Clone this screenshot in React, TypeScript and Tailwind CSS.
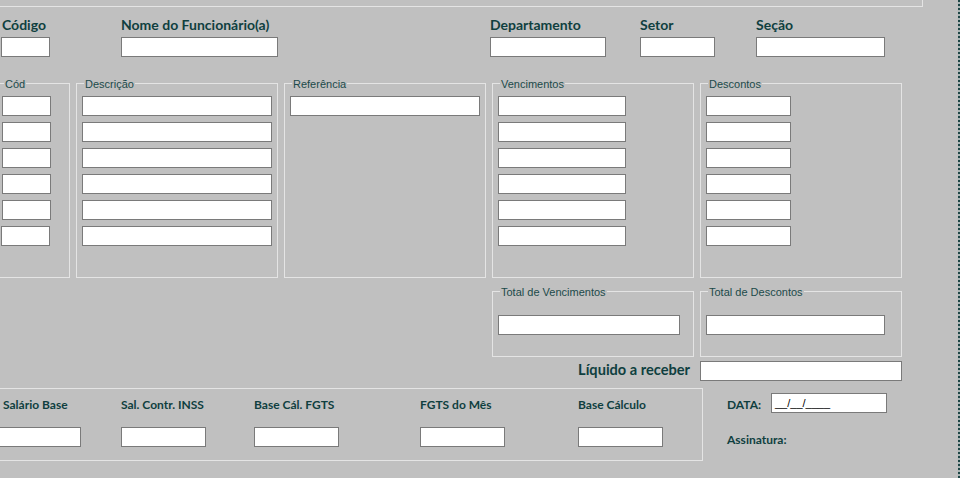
import React from "react";

const head =
  "font-['Lato',sans-serif] text-[14px] leading-[17px] font-bold text-[#0f3f3f] whitespace-nowrap";
const small =
  "font-['Lato',sans-serif] text-[12px] leading-[14px] font-bold text-[#0f3f3f] whitespace-nowrap";
const legend =
  "font-['Liberation_Sans',Arial,sans-serif] text-[11px] leading-[13px] text-[#1c4a4a] whitespace-nowrap";

function Input({ className = "", children }: { className?: string; children?: React.ReactNode }) {
  return (
    <div
      className={`h-[20px] shrink-0 border border-[#7a7a7a] bg-white ${className}`}
    >
      {children}
    </div>
  );
}

function Group({
  title,
  className,
  children,
}: {
  title: string;
  className: string;
  children?: React.ReactNode;
}) {
  return (
    <div className={`flex shrink-0 flex-col border border-[#e4e4e4] ${className}`}>
      <span className={`-mt-[6px] ml-[7px] self-start bg-[#c0c0c0] px-[1px] ${legend}`}>
        {title}
      </span>
      {children}
    </div>
  );
}

function Column({ w, count = 6 }: { w: string; count?: number }) {
  return (
    <div className="ml-[5px] mt-[5px] flex flex-col gap-[6px]">
      {Array.from({ length: count }).map((_, i) => (
        <Input key={i} className={w} />
      ))}
    </div>
  );
}

export default function App() {
  return (
    <div className="flex h-[478px] w-[960px] overflow-hidden bg-[#c0c0c0]">
      <div className="flex w-[958px] shrink-0 flex-col">
        {/* top group box (cut off) */}
        <div className="ml-[-4px] h-[7px] w-[927px] shrink-0 border-b border-r border-[#e4e4e4]" />

        {/* employee header */}
        <div className="mt-[9px] flex">
          <div className="ml-[1px] flex w-[49px] flex-col gap-[4px]">
            <span className={`pl-[1px] ${head}`}>Código</span>
            <Input className="w-[49px]" />
          </div>
          <div className="ml-[71px] flex w-[157px] flex-col gap-[4px]">
            <span className={head}>Nome do Funcionário(a)</span>
            <Input className="w-[157px]" />
          </div>
          <div className="ml-[212px] flex w-[116px] flex-col gap-[4px]">
            <span className={head}>Departamento</span>
            <Input className="w-[116px]" />
          </div>
          <div className="ml-[34px] flex w-[75px] flex-col gap-[4px]">
            <span className={head}>Setor</span>
            <Input className="w-[75px]" />
          </div>
          <div className="ml-[41px] flex w-[129px] flex-col gap-[4px]">
            <span className={head}>Seção</span>
            <Input className="w-[129px]" />
          </div>
        </div>

        {/* items */}
        <div className="ml-[-4px] mt-[26px] flex h-[195px] shrink-0 gap-[6px]">
          <Group title="Cód" className="w-[74px]">
            <div className="ml-[5px] mt-[5px] flex flex-col gap-[6px]">
              <Input className="w-[49px]" />
              <Input className="w-[49px]" />
              <Input className="w-[49px]" />
              <Input className="w-[49px]" />
              <Input className="w-[49px]" />
              <Input className="ml-[-1px] w-[49px]" />
            </div>
          </Group>
          <Group title="Descrição" className="w-[202px]">
            <Column w="w-[190px]" />
          </Group>
          <Group title="Referência" className="w-[202px]">
            <Column w="w-[190px]" count={1} />
          </Group>
          <Group title="Vencimentos" className="w-[202px]">
            <Column w="w-[128px]" />
          </Group>
          <Group title="Descontos" className="w-[202px]">
            <Column w="w-[85px]" />
          </Group>
        </div>

        {/* totals */}
        <div className="ml-[492px] mt-[13px] flex h-[66px] shrink-0 gap-[6px]">
          <Group title="Total de Vencimentos" className="w-[202px]">
            <Input className="ml-[5px] mt-[16px] w-[182px]" />
          </Group>
          <Group title="Total de Descontos" className="w-[202px]">
            <Input className="ml-[5px] mt-[16px] w-[179px]" />
          </Group>
        </div>

        <div className="mt-[4px] flex items-start">
          <span className="w-[690px] whitespace-nowrap text-right font-['Lato',sans-serif] text-[14.6px] leading-[17px] font-bold text-[#0f3f3f]">
            Líquido a receber
          </span>
          <Input className="ml-[10px] w-[202px]" />
        </div>

        {/* bases + signature */}
        <div className="mt-[7px] flex">
          <div className="ml-[-8px] flex h-[73px] w-[711px] shrink-0 border border-[#e4e4e4] pt-[9px]">
            <div className="ml-[3px] flex w-[85px] flex-col gap-[15px]">
              <span className={`pl-[7px] ${small}`}>Salário Base</span>
              <Input className="w-[85px]" />
            </div>
            <div className="ml-[40px] flex w-[85px] flex-col gap-[15px]">
              <span className={small}>Sal. Contr. INSS</span>
              <Input className="w-[85px]" />
            </div>
            <div className="ml-[48px] flex w-[85px] flex-col gap-[15px]">
              <span className={small}>Base Cál. FGTS</span>
              <Input className="w-[85px]" />
            </div>
            <div className="ml-[81px] flex w-[85px] flex-col gap-[15px]">
              <span className={small}>FGTS do Mês</span>
              <Input className="w-[85px]" />
            </div>
            <div className="ml-[73px] flex w-[85px] flex-col gap-[15px]">
              <span className={small}>Base Cálculo</span>
              <Input className="w-[85px]" />
            </div>
          </div>

          <div className="ml-[24px] mt-[5px] flex flex-col">
            <div className="flex items-start">
              <span className={`mt-[5px] w-[44px] ${small}`}>DATA:</span>
              <Input className="w-[116px] pl-[3px]">
                <span className="block font-['Liberation_Sans',Arial,sans-serif] text-[11px] leading-[18px] text-black">
                  __/__/____
                </span>
              </Input>
            </div>
            <span className={`mt-[20px] ${small}`}>Assinatura:</span>
          </div>
        </div>
      </div>

      {/* dotted designer edge */}
      <div className="h-full w-[2px] shrink-0 bg-[repeating-linear-gradient(to_bottom,#1e4646_0px,#1e4646_2px,#a9b4b4_2px,#a9b4b4_4px)]" />
    </div>
  );
}
